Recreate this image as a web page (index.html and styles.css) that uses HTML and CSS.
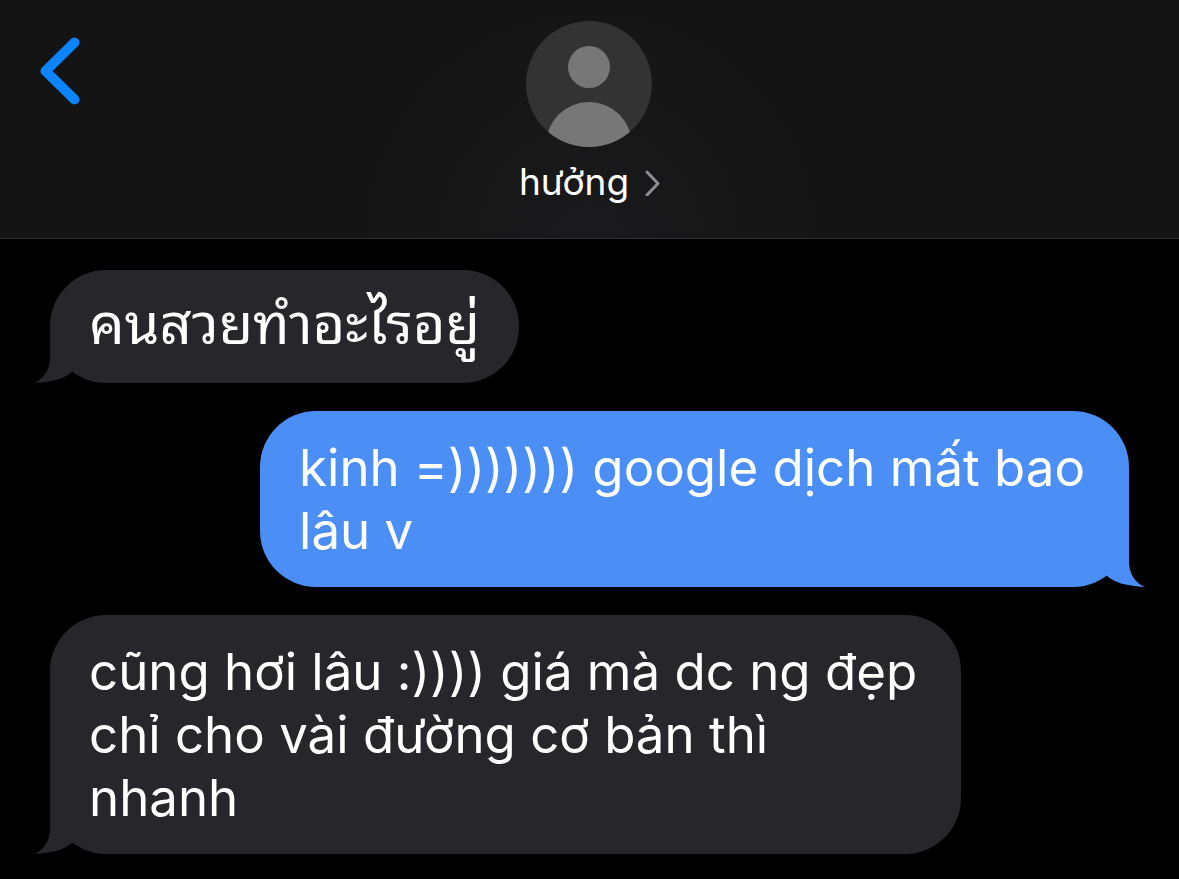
FILE: index.html
```html
<!DOCTYPE html>
<html lang="vi">

<head>
    <meta charset="UTF-8">
    <meta name="viewport" content="width=device-width, initial-scale=1.0">
    <title>hưởng</title>
    <link rel="stylesheet" href="styles.css">
</head>

<body>
    <header class="top">
        <button class="back" aria-label="Back">
            <svg width="40" height="68" viewBox="0 0 40 68">
                <path d="M34.5 5.5 L5.5 34 L34.5 62.5" />
            </svg>
        </button>
        <a href="#" class="contact">
            <svg class="avatar" width="126" height="126" viewBox="0 0 126 126">
                <clipPath id="round">
                    <circle cx="63" cy="63" r="63" />
                </clipPath>
                <circle cx="63" cy="63" r="63" fill="#333333" />
                <g clip-path="url(#round)" fill="#777777">
                    <circle cx="63" cy="46" r="21" />
                    <circle cx="63" cy="124" r="43" />
                </g>
            </svg>
            <span class="name">hưởng
                <svg width="15" height="28" viewBox="0 0 15 28">
                    <path d="M2 4 L13 15.5 L2 27" />
                </svg>
            </span>
        </a>
    </header>
    <main class="chat">
        <div class="msg get thai">
            <p lang="th">คนสวยทำอะไรอยู่</p>
            <svg class="tail" width="40" height="60" viewBox="0 0 40 60">
                <path d="M16 0 V35 C16 46 10 56 0 60 C18 59 31 56 39 48 Z" />
            </svg>
        </div>
        <div class="msg send long">
            <p>kinh =))))))) google dịch mất bao<br>lâu v</p>
            <svg class="tail" width="40" height="60" viewBox="0 0 40 60">
                <path d="M16 0 V35 C16 46 10 56 0 60 C18 59 31 56 39 48 Z" />
            </svg>
        </div>
        <div class="msg get long">
            <p>cũng hơi lâu :)))) giá mà dc ng đẹp<br>chỉ cho vài đường cơ bản thì<br>nhanh</p>
            <svg class="tail" width="40" height="60" viewBox="0 0 40 60">
                <path d="M16 0 V35 C16 46 10 56 0 60 C18 59 31 56 39 48 Z" />
            </svg>
        </div>
    </main>
</body>

</html>
```
FILE: styles.css
```css
body {
    margin: 0;
    background-color: #000;
    color: #fff;
    font-family: Inter, "Noto Sans", sans-serif;
}

.top {
    display: grid;
    grid-template-columns: 1fr auto 1fr;
    align-items: start;
    padding: 21px 40px 33px;
    background: radial-gradient(circle at 50% 100%, #1a1a1c 0, #141414 260px);
    border-bottom: 1px solid #303034;
}

.back {
    justify-self: start;
    margin-top: 16px;
    padding: 0;
    border: none;
    background: none;
    cursor: pointer;
}

.back svg {
    display: block;
    fill: none;
    stroke: #0a84ff;
    stroke-width: 10;
    stroke-linecap: round;
    stroke-linejoin: round;
}

.contact {
    display: flex;
    flex-direction: column;
    align-items: center;
    gap: 12px;
    color: #fff;
    text-decoration: none;
}

.avatar {
    display: block;
}

.name {
    display: flex;
    align-items: center;
    gap: 16px;
    font-size: 37px;
    line-height: 46px;
}

.name svg {
    fill: none;
    stroke: #8e8e93;
    stroke-width: 3;
    stroke-linecap: round;
    stroke-linejoin: round;
}

.chat {
    display: flex;
    flex-direction: column;
    gap: 28px;
    padding: 31px 50px 24px;
}

.msg {
    position: relative;
    box-sizing: border-box;
    padding: 25px 39px;
    border-radius: 56px;
    font-size: 51px;
    line-height: 63px;
}

.msg p {
    margin: 0;
    white-space: nowrap;
}

.long {
    padding-right: 44px;
}

/* looped Thai letters sit lower in the line */
.thai {
    padding-top: 18px;
    padding-bottom: 32px;
    font-family: "Noto Sans Thai Looped", Loma, Garuda, Waree, "Noto Sans Thai", sans-serif;
    font-size: 56px;
}

.get {
    align-self: flex-start;
    background-color: #27262b;
    fill: #27262b;
}

.send {
    align-self: flex-end;
    background-color: #4a8ef6;
    fill: #4a8ef6;
}

.tail {
    position: absolute;
    bottom: 0;
    left: -16px;
}

.send .tail {
    left: auto;
    right: -16px;
    transform: scaleX(-1);
}
```
